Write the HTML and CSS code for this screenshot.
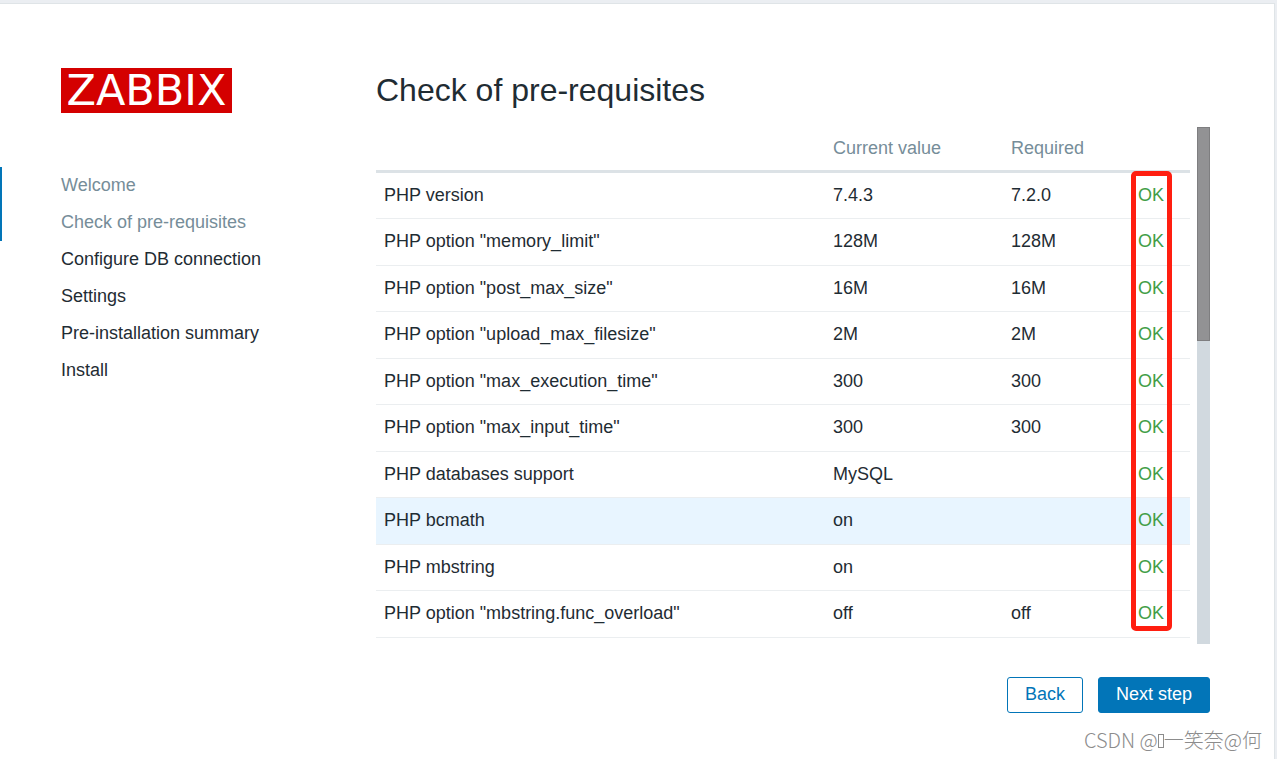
FILE: index.html
```html
<!DOCTYPE html>
<html lang="en">
<head>
<meta charset="utf-8">
<title>Installation</title>
<link rel="stylesheet" href="styles.css">
</head>
<body>
<div class="setup">
  <aside class="sidebar">
    <div class="logo">ZABBIX</div>
    <ul class="steps">
      <li class="step done">Welcome</li>
      <li class="step done">Check of pre-requisites</li>
      <li class="step">Configure DB connection</li>
      <li class="step">Settings</li>
      <li class="step">Pre-installation summary</li>
      <li class="step">Install</li>
    </ul>
  </aside>
  <main class="content">
    <h1 class="title">Check of pre-requisites</h1>
    <div class="viewport">
      <div class="table-wrap">
        <table class="checks">
          <colgroup><col><col class="col-current"><col class="col-required"><col class="col-status"></colgroup>
          <thead>
            <tr><th></th><th>Current value</th><th>Required</th><th></th></tr>
          </thead>
          <tbody>
            <tr><td>PHP version</td><td>7.4.3</td><td>7.2.0</td><td class="ok">OK</td></tr>
            <tr><td>PHP option "memory_limit"</td><td>128M</td><td>128M</td><td class="ok">OK</td></tr>
            <tr><td>PHP option "post_max_size"</td><td>16M</td><td>16M</td><td class="ok">OK</td></tr>
            <tr><td>PHP option "upload_max_filesize"</td><td>2M</td><td>2M</td><td class="ok">OK</td></tr>
            <tr><td>PHP option "max_execution_time"</td><td>300</td><td>300</td><td class="ok">OK</td></tr>
            <tr><td>PHP option "max_input_time"</td><td>300</td><td>300</td><td class="ok">OK</td></tr>
            <tr><td>PHP databases support</td><td>MySQL</td><td></td><td class="ok">OK</td></tr>
            <tr class="hovered"><td>PHP bcmath</td><td>on</td><td></td><td class="ok">OK</td></tr>
            <tr><td>PHP mbstring</td><td>on</td><td></td><td class="ok">OK</td></tr>
            <tr><td>PHP option "mbstring.func_overload"</td><td>off</td><td>off</td><td class="ok">OK</td></tr>
          </tbody>
        </table>
        <div class="highlight"></div>
      </div>
      <div class="scrollbar"><div class="thumb"></div></div>
    </div>
    <div class="actions">
      <button type="button" class="btn btn-alt">Back</button>
      <button type="button" class="btn">Next step</button>
    </div>
  </main>
  <div class="watermark">CSDN @<span class="missing"></span>一笑奈@何</div>
</div>
</body>
</html>
```

FILE: styles.css
```css
* { box-sizing: border-box; }

body {
  margin: 0;
  padding: 3px 2px 0 0;
  background: #ebeef2;
  color: #1f2c33;
  font: 18px/22px "Liberation Sans", Arial, sans-serif;
}

.setup {
  position: relative;
  display: flex;
  min-height: calc(100vh - 3px);
  padding: 64px 64px 44px 0;
  background: #fff;
  border-top: 1px solid #dfe4e7;
  border-right: 1px solid #dfe4e7;
}

.sidebar { flex: 0 0 376px; }

.logo {
  width: 171px;
  margin-left: 61px;
  background: #d40000;
  color: #fff;
  font: 43px/45px "DejaVu Sans", sans-serif;
  text-align: center;
}

.steps {
  margin: 54px 0 0;
  padding: 0;
  list-style: none;
}

.step {
  padding-left: 59px;
  border-left: 2px solid transparent;
  line-height: 37px;
}

.step.done {
  border-left-color: #0275b8;
  color: #768d99;
}

.content { flex: 1; min-width: 0; }

.title {
  margin: 0 0 14px;
  font-size: 32px;
  font-weight: 400;
  line-height: 45px;
}

.viewport {
  display: flex;
  gap: 7px;
}

.table-wrap {
  position: relative;
  flex: 1;
  padding-bottom: 6px;
}

.checks {
  width: 100%;
  table-layout: fixed;
  border-collapse: separate;
  border-spacing: 0;
}

.col-current { width: 178px; }
.col-required { width: 127px; }
.col-status { width: 60px; }

.checks th,
.checks td {
  padding: 0 8px 2px;
  text-align: left;
  font-weight: 400;
}

.checks th {
  height: 46px;
  border-bottom: 3px solid #dce2e6;
  color: #768d99;
}

.checks td {
  height: 46px;
  border-bottom: 1px solid #ebeef0;
}

.checks tr:nth-child(even) td { height: 47px; }
.checks .hovered td { background: #e8f5ff; }
.checks .ok { color: #429e47; }

.highlight {
  position: absolute;
  top: 44px;
  right: 18px;
  bottom: 13px;
  width: 41px;
  border: 5px solid #ff1e10;
  border-radius: 5px;
}

.scrollbar {
  width: 13px;
  background: #d1d9df;
}

.thumb {
  height: 214px;
  background: #929294;
  border: 1px solid #7e7e80;
}

.actions {
  display: flex;
  justify-content: flex-end;
  gap: 15px;
  margin-top: 33px;
}

.btn {
  padding: 5px 17px 7px;
  background: #0275b8;
  border: 1px solid #0275b8;
  border-radius: 3px;
  color: #fff;
  font: inherit;
}

.btn-alt {
  background: #fff;
  color: #0275b8;
}

.watermark {
  position: absolute;
  right: 12px;
  bottom: 4px;
  color: #8c8c8c;
  font: 300 20px/30px "Noto Sans CJK SC", sans-serif;
  white-space: nowrap;
}

.missing {
  display: inline-block;
  width: 6px;
  height: 14px;
  border: 1px solid #8c8c8c;
}
```
